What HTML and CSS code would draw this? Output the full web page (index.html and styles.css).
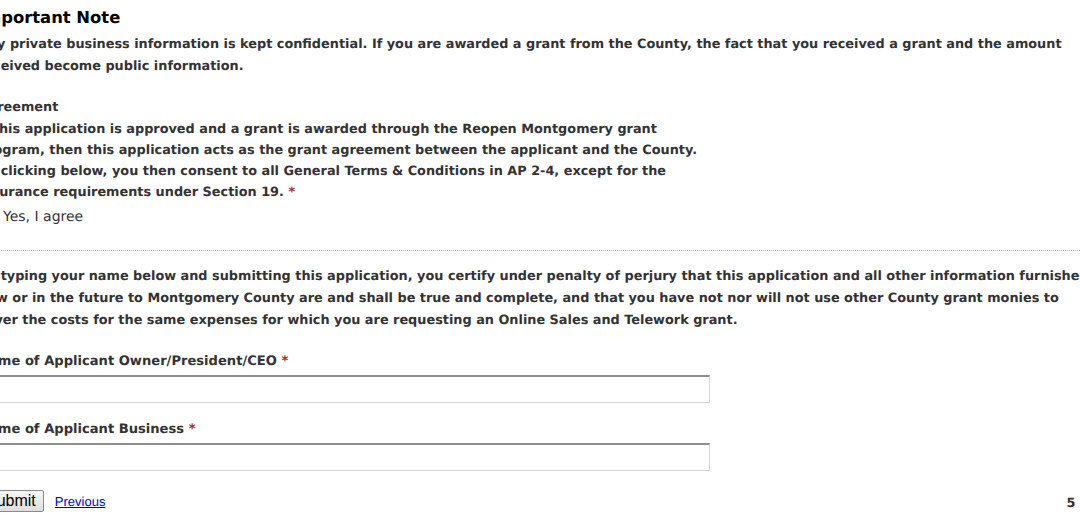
FILE: index.html
```html
<!DOCTYPE html>
<html>
<head>
<meta charset="utf-8">
<link rel="stylesheet" href="styles.css">
</head>
<body>
<div class="page">
  <h3 class="note-title">Important Note</h3>
  <p class="note-text">Any private business information is kept confidential. If you are awarded a grant from the County, the fact that you received a grant and the amount received become public information.</p>

  <div class="field agreement">
    <div class="field-label">Agreement</div>
    <div class="field-desc">If this application is approved and a grant is awarded through the Reopen Montgomery grant program, then this application acts as the grant agreement between the applicant and the County. By clicking below, you then consent to all General Terms &amp; Conditions in AP 2-4, except for the insurance requirements under Section 19. <span class="req">*</span></div>
    <label class="check"><input type="checkbox"> Yes, I agree</label>
  </div>

  <hr class="divider">

  <p class="certify">By typing your name below and submitting this application, you certify under penalty of perjury that this application and all other information furnished now or in the future to Montgomery County are and shall be true and complete, and that you have not nor will not use other County grant monies to cover the costs for the same expenses for which you are requesting an Online Sales and Telework grant.</p>

  <div class="field text-field first">
    <label class="field-label">Name of Applicant Owner/President/CEO <span class="req">*</span></label>
    <input class="text-input" type="text">
  </div>

  <div class="field text-field second">
    <label class="field-label">Name of Applicant Business <span class="req">*</span></label>
    <input class="text-input" type="text">
  </div>

  <div class="footer">
    <div class="actions">
      <button class="submit" type="button">Submit</button>
      <a class="prev" href="#">Previous</a>
    </div>
    <div class="pager">5 / 5</div>
  </div>
</div>
</body>
</html>
```

FILE: styles.css
```css
html, body {
  margin: 0;
  padding: 0;
  background: #fff;
  overflow: hidden;
}
.page {
  margin-left: -22px;
  width: 1120px;
  font-family: "DejaVu Sans", Verdana, sans-serif;
  font-size: 12.85px;
  text-rendering: geometricPrecision;
  color: #333;
}
.note-title {
  font-size: 16.4px;
  font-weight: bold;
  color: #000;
  margin: 0;
  padding-top: 7px;
  line-height: 22px;
}
.note-text {
  font-weight: bold;
  line-height: 22px;
  margin: 5px 0 0 0;
}
.agreement {
  margin-top: 19px;
  width: 735px;
  line-height: 21px;
}
.field-label {
  font-weight: bold;
  display: block;
}
.field-desc {
  font-weight: bold;
  margin-top: 1px;
}
.req {
  color: #a52a2a;
}
.check {
  display: flex;
  align-items: center;
  gap: 12px;
  margin-top: 4px;
  font-weight: normal;
  font-size: 14px;
}
.check input {
  margin: 0;
  width: 13px;
  height: 13px;
}
.divider {
  border: 0;
  border-top: 1px dotted #aaa;
  margin: 22px 0 0 0;
  height: 0;
}
.certify {
  font-weight: bold;
  line-height: 22px;
  margin: 15px 0 0 0;
}
.text-field {
  width: 732px;
}
.text-field .field-label {
  line-height: 20px;
  font-size: 13.1px;
}
.text-field.first {
  margin-top: 20px;
}
.text-field.second {
  margin-top: 17px;
}
.text-input {
  display: block;
  box-sizing: border-box;
  width: 732px;
  height: 28px;
  margin-top: 3px;
  border: 1px solid #d4d4d4;
  border-top: 2px solid #8e8e8e;
  background: #fff;
  padding: 2px 4px;
  font: inherit;
}
.footer {
  display: flex;
  justify-content: space-between;
  align-items: center;
  margin-top: 19px;
}
.actions {
  display: flex;
  align-items: center;
  gap: 11px;
}
.submit {
  font-family: "Liberation Sans", Arial, sans-serif;
  font-size: 16px;
  padding: 0 7px;
  height: 22px;
  border: 1px solid #8a8a8a;
  border-radius: 2px;
  background: linear-gradient(#f6f6f6, #dedede);
  color: #000;
}
.prev {
  font-family: "Liberation Sans", Arial, sans-serif;
  font-size: 13px;
  color: #0000cc;
  text-decoration: underline;
  margin-top: 1px;
}
.pager {
  font-weight: bold;
  color: #333;
  margin-top: 4px;
}
```
